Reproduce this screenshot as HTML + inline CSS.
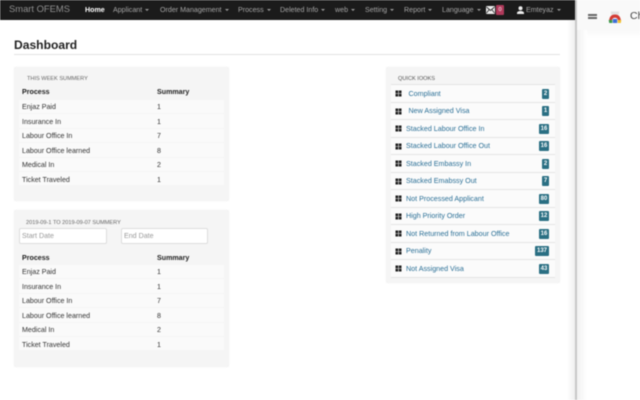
<!DOCTYPE html>
<html>
<head>
<meta charset="utf-8">
<style>
html,body{margin:0;padding:0;width:640px;height:400px;overflow:hidden;background:#fff;font-family:"Liberation Sans",sans-serif}
#wrap{position:absolute;left:0;top:0;width:640px;height:400px;filter:blur(0.45px)}
.a{position:absolute;white-space:nowrap}
.nav{position:absolute;left:0;top:0;width:575px;height:20px;background:#1b1b1b}
.n{position:absolute;top:4px;font-size:7.1px;line-height:12px;color:#a5a5a5;white-space:nowrap}
.n i{display:inline-block;width:0;height:0;border-left:2px solid transparent;border-right:2px solid transparent;border-top:2px solid #9d9d9d;margin-left:3px;vertical-align:1px}
.panel{position:absolute;background:#f5f5f5;border-radius:2px;box-shadow:0 0 1px #e8e8e8}
.t{position:absolute;font-size:7.1px;line-height:10px;color:#333;white-space:nowrap}
.b{font-weight:bold;color:#222}
.cap{position:absolute;font-size:5.6px;line-height:8px;color:#666;white-space:nowrap}
.row{position:absolute;height:1px;background:#e4e4e4}
.cell{position:absolute;background:#fafafa}
.lnk{position:absolute;left:406px;font-size:7.15px;line-height:10px;color:#2a6f96;white-space:nowrap}
.ic{position:absolute;left:395px;width:7px;height:7px}
.bd{position:absolute;height:10px;background:#2a6f83;color:#fff;font-size:6px;font-weight:bold;line-height:10px;text-align:center;border-radius:1px}
.inp{position:absolute;background:#fff;border:1px solid #ddd;border-radius:2px;height:14px;font-size:7.1px;line-height:14px;color:#999;text-indent:2px;box-sizing:content-box}
</style>
</head>
<body>
<div id="wrap">
<div class="nav"></div>
<div class="n" style="left:9px;top:3px;font-size:9.4px;color:#8f8f8f">Smart OFEMS</div>
<div class="n" style="left:85px;color:#fff;font-weight:bold">Home</div>
<div class="n" style="left:113px">Applicant<i></i></div>
<div class="n" style="left:160px">Order Management<i></i></div>
<div class="n" style="left:238px">Process<i></i></div>
<div class="n" style="left:280px">Deleted Info<i></i></div>
<div class="n" style="left:335px">web<i></i></div>
<div class="n" style="left:365px">Setting<i></i></div>
<div class="n" style="left:404px">Report<i></i></div>
<div class="n" style="left:442px">Language<i></i></div>
<svg class="a" style="left:486px;top:6px" width="9" height="8" viewBox="0 0 9 8"><rect width="9" height="8" rx="1" fill="#eee"/><path d="M0.5 1L4.5 4.5L8.5 1M0.5 7L3.2 3.5M8.5 7L5.8 3.5" stroke="#333" stroke-width="0.9" fill="none"/></svg>
<div class="a" style="left:496px;top:5px;width:8px;height:10px;background:#b03a5b;border-radius:1px;color:#fff;font-size:5.5px;line-height:10px;text-align:center">0</div>
<svg class="a" style="left:517px;top:6px" width="7" height="8" viewBox="0 0 7 8"><circle cx="3.5" cy="2.2" r="2" fill="#eee"/><path d="M0 8V7C0 5.5 2 5 3.5 5S7 5.5 7 7V8Z" fill="#eee"/></svg>
<div class="n" style="left:526px">Emteyaz<i></i></div>

<div class="a" style="left:14px;top:37.500px;font-size:12.1px;line-height:15px;font-weight:bold;color:#222">Dashboard</div>
<div class="a" style="left:14px;top:54px;width:546px;height:1px;background:#e2e2e2"></div>

<!-- panel 1 -->
<div class="panel" style="left:14px;top:67px;width:215px;height:134px"></div>
<div class="cap" style="left:27px;top:75px">THIS WEEK SUMMERY</div>
<div class="t b" style="left:22px;top:87px">Process</div>
<div class="t b" style="left:157px;top:87px">Summary</div>
<div class="cell" style="left:19px;top:100px;width:205px;height:13px"></div>
<div class="cell" style="left:19px;top:114px;width:205px;height:14px"></div>
<div class="cell" style="left:19px;top:129px;width:205px;height:13px"></div>
<div class="cell" style="left:19px;top:143px;width:205px;height:14px"></div>
<div class="cell" style="left:19px;top:158px;width:205px;height:13px"></div>
<div class="cell" style="left:19px;top:172px;width:205px;height:13px"></div>
<div class="t" style="left:22px;top:102px">Enjaz Paid</div><div class="t" style="left:157px;top:102px">1</div>
<div class="t" style="left:22px;top:117px">Insurance In</div><div class="t" style="left:157px;top:117px">1</div>
<div class="t" style="left:22px;top:131px">Labour Office In</div><div class="t" style="left:157px;top:131px">7</div>
<div class="t" style="left:22px;top:146px">Labour Office learned</div><div class="t" style="left:157px;top:146px">8</div>
<div class="t" style="left:22px;top:160px">Medical In</div><div class="t" style="left:157px;top:160px">2</div>
<div class="t" style="left:22px;top:175px">Ticket Traveled</div><div class="t" style="left:157px;top:175px">1</div>

<!-- panel 2 -->
<div class="panel" style="left:14px;top:210px;width:215px;height:157px"></div>
<div class="cap" style="left:26px;top:219px">2019-09-1 TO 2019-09-07 SUMMERY</div>
<div class="inp" style="left:19px;top:228px;width:86px">Start Date</div>
<div class="inp" style="left:121px;top:228px;width:85px">End Date</div>
<div class="t b" style="left:22px;top:253px">Process</div>
<div class="t b" style="left:157px;top:253px">Summary</div>
<div class="cell" style="left:19px;top:265px;width:205px;height:13px"></div>
<div class="cell" style="left:19px;top:279px;width:205px;height:14px"></div>
<div class="cell" style="left:19px;top:294px;width:205px;height:13px"></div>
<div class="cell" style="left:19px;top:308px;width:205px;height:14px"></div>
<div class="cell" style="left:19px;top:323px;width:205px;height:13px"></div>
<div class="cell" style="left:19px;top:337px;width:205px;height:13px"></div>
<div class="t" style="left:22px;top:267px">Enjaz Paid</div><div class="t" style="left:157px;top:267px">1</div>
<div class="t" style="left:22px;top:282px">Insurance In</div><div class="t" style="left:157px;top:282px">1</div>
<div class="t" style="left:22px;top:296px">Labour Office In</div><div class="t" style="left:157px;top:296px">7</div>
<div class="t" style="left:22px;top:311px">Labour Office learned</div><div class="t" style="left:157px;top:311px">8</div>
<div class="t" style="left:22px;top:325px">Medical In</div><div class="t" style="left:157px;top:325px">2</div>
<div class="t" style="left:22px;top:340px">Ticket Traveled</div><div class="t" style="left:157px;top:340px">1</div>

<!-- quick links -->
<div class="panel" style="left:386px;top:67px;width:174px;height:216px"></div>
<div class="cap" style="left:398px;top:75px;color:#555">QUICK IOOKS</div>
<div class="cell" style="left:391px;top:85px;width:164px;height:192px;background:#fbfbfb"></div>
<div class="row" style="left:391px;top:84px;width:164px"></div>
<div class="row" style="left:391px;top:102px;width:164px"></div>
<div class="row" style="left:391px;top:119px;width:164px"></div>
<div class="row" style="left:391px;top:137px;width:164px"></div>
<div class="row" style="left:391px;top:154px;width:164px"></div>
<div class="row" style="left:391px;top:172px;width:164px"></div>
<div class="row" style="left:391px;top:189px;width:164px"></div>
<div class="row" style="left:391px;top:207px;width:164px"></div>
<div class="row" style="left:391px;top:224px;width:164px"></div>
<div class="row" style="left:391px;top:242px;width:164px"></div>
<div class="row" style="left:391px;top:259px;width:164px"></div>
<div class="row" style="left:391px;top:277px;width:164px"></div>

<div class="lnk" style="left:408.500px;top:88.500px">Compliant</div>
<div class="lnk" style="left:408.500px;top:106px">New Assigned Visa</div>
<div class="lnk" style="top:123.500px">Stacked Labour Office In</div>
<div class="lnk" style="top:141px">Stacked Labour Office Out</div>
<div class="lnk" style="top:158.500px">Stacked Embassy In</div>
<div class="lnk" style="top:176px">Stacked Emabssy Out</div>
<div class="lnk" style="top:193.500px">Not Processed Applicant</div>
<div class="lnk" style="top:211px">High Priority Order</div>
<div class="lnk" style="top:228.500px">Not Returned from Labour Office</div>
<div class="lnk" style="top:246px">Penality</div>
<div class="lnk" style="top:263.500px">Not Assigned Visa</div>

<svg class="ic" style="top:90px" viewBox="0 0 7 7"><path d="M0.5 0.5h2.7v2.7h-2.700zM3.800 0.5h2.700v2.700h-2.700zM0.5 3.800h2.700v2.700h-2.700zM3.800 3.800h2.700v2.700h-2.700z" fill="#1c1c1c"/></svg>
<svg class="ic" style="top:108px" viewBox="0 0 7 7"><path d="M0.5 0.5h2.7v2.7h-2.700zM3.800 0.5h2.700v2.700h-2.700zM0.5 3.800h2.700v2.700h-2.700zM3.800 3.800h2.700v2.700h-2.700z" fill="#1c1c1c"/></svg>
<svg class="ic" style="top:125px" viewBox="0 0 7 7"><path d="M0.5 0.5h2.7v2.7h-2.700zM3.800 0.5h2.700v2.700h-2.700zM0.5 3.800h2.700v2.700h-2.700zM3.800 3.800h2.700v2.700h-2.700z" fill="#1c1c1c"/></svg>
<svg class="ic" style="top:143px" viewBox="0 0 7 7"><path d="M0.5 0.5h2.7v2.7h-2.700zM3.800 0.5h2.700v2.700h-2.700zM0.5 3.800h2.700v2.700h-2.700zM3.800 3.800h2.700v2.700h-2.700z" fill="#1c1c1c"/></svg>
<svg class="ic" style="top:160px" viewBox="0 0 7 7"><path d="M0.5 0.5h2.7v2.7h-2.700zM3.800 0.5h2.700v2.700h-2.700zM0.5 3.800h2.700v2.700h-2.700zM3.800 3.800h2.700v2.700h-2.700z" fill="#1c1c1c"/></svg>
<svg class="ic" style="top:178px" viewBox="0 0 7 7"><path d="M0.5 0.5h2.7v2.7h-2.700zM3.800 0.5h2.700v2.700h-2.700zM0.5 3.800h2.700v2.700h-2.700zM3.800 3.800h2.700v2.700h-2.700z" fill="#1c1c1c"/></svg>
<svg class="ic" style="top:195px" viewBox="0 0 7 7"><path d="M0.5 0.5h2.7v2.7h-2.700zM3.800 0.5h2.700v2.700h-2.700zM0.5 3.800h2.700v2.700h-2.700zM3.800 3.800h2.700v2.700h-2.700z" fill="#1c1c1c"/></svg>
<svg class="ic" style="top:213px" viewBox="0 0 7 7"><path d="M0.5 0.5h2.7v2.7h-2.700zM3.800 0.5h2.700v2.700h-2.700zM0.5 3.800h2.700v2.700h-2.700zM3.800 3.800h2.700v2.700h-2.700z" fill="#1c1c1c"/></svg>
<svg class="ic" style="top:230px" viewBox="0 0 7 7"><path d="M0.5 0.5h2.7v2.7h-2.700zM3.800 0.5h2.700v2.700h-2.700zM0.5 3.800h2.700v2.700h-2.700zM3.800 3.800h2.700v2.700h-2.700z" fill="#1c1c1c"/></svg>
<svg class="ic" style="top:248px" viewBox="0 0 7 7"><path d="M0.5 0.5h2.7v2.7h-2.700zM3.800 0.5h2.700v2.700h-2.700zM0.5 3.800h2.700v2.700h-2.700zM3.800 3.800h2.700v2.700h-2.700z" fill="#1c1c1c"/></svg>
<svg class="ic" style="top:265px" viewBox="0 0 7 7"><path d="M0.5 0.5h2.7v2.7h-2.700zM3.800 0.5h2.700v2.700h-2.700zM0.5 3.800h2.700v2.700h-2.700zM3.800 3.800h2.700v2.700h-2.700z" fill="#1c1c1c"/></svg>

<div class="bd" style="left:542px;top:88.500px;width:7px">2</div>
<div class="bd" style="left:542px;top:106px;width:7px">1</div>
<div class="bd" style="left:539px;top:123.500px;width:10px">16</div>
<div class="bd" style="left:539px;top:141px;width:10px">16</div>
<div class="bd" style="left:542px;top:158.500px;width:7px">2</div>
<div class="bd" style="left:542px;top:176px;width:7px">7</div>
<div class="bd" style="left:539px;top:193.500px;width:10px">80</div>
<div class="bd" style="left:539px;top:211px;width:10px">12</div>
<div class="bd" style="left:539px;top:228.500px;width:10px">16</div>
<div class="bd" style="left:535px;top:246px;width:14px">137</div>
<div class="bd" style="left:539px;top:263.500px;width:10px">43</div>

<!-- right side panel -->
<div class="a" style="left:567px;top:20px;width:8px;height:380px;background:linear-gradient(to right,#fff,#f0f0f0)"></div>
<div class="a" style="left:575px;top:0;width:2px;height:400px;background:#c8c8c8"></div>
<div class="a" style="left:577px;top:0;width:63px;height:400px;background:#fff"></div>
<div class="a" style="left:577px;top:0;width:63px;height:38px;background:linear-gradient(to bottom,#f9f9f9 80%,#fff)"></div>
<div class="a" style="left:577px;top:30px;width:10px;height:370px;background:linear-gradient(to right,#f1f1f1,#fff)"></div>
<div class="a" style="left:588px;top:14px;width:9px;height:1.500px;background:#666"></div>
<div class="a" style="left:588px;top:17px;width:9px;height:1.500px;background:#666"></div>
<svg class="a" style="left:608px;top:11px" width="14" height="13" viewBox="0 0 14 13"><rect x="3" y="0.500" width="8" height="3" fill="#e2e2e2"/><path d="M1.200 9C1.700 5 4 3.500 7 3.500S12.300 5 12.800 9H10C9.500 7.500 8.500 6.800 7 6.800S4.500 7.500 4 9Z" fill="#d33b35"/><path d="M0.700 9H4.300V12H1.200Z" fill="#3a9a4a"/><path d="M9.700 9H13.300L12.800 12H9.700Z" fill="#f2c230"/><rect x="4.800" y="8" width="4.400" height="4" fill="#3f6fd8"/></svg>
<div class="a" style="left:630px;top:9px;font-size:10.5px;line-height:14px;color:#444">Ch</div>
</div>
</body>
</html>
